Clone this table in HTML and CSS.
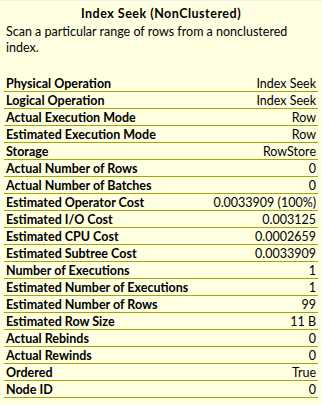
FILE: index.html
```html
<!DOCTYPE html>
<html>
<head>
<meta charset="utf-8">
<link rel="stylesheet" href="styles.css">
</head>
<body>
<div class="tip">
  <div class="title">Index Seek (NonClustered)</div>
  <div class="desc">Scan a particular range of rows from a nonclustered index.</div>
  <div class="props">
    <div class="row"><span class="k">Physical Operation</span><span class="v">Index Seek</span></div>
    <div class="row"><span class="k">Logical Operation</span><span class="v">Index Seek</span></div>
    <div class="row"><span class="k">Actual Execution Mode</span><span class="v">Row</span></div>
    <div class="row"><span class="k">Estimated Execution Mode</span><span class="v">Row</span></div>
    <div class="row"><span class="k">Storage</span><span class="v">RowStore</span></div>
    <div class="row"><span class="k">Actual Number of Rows</span><span class="v">0</span></div>
    <div class="row"><span class="k">Actual Number of Batches</span><span class="v">0</span></div>
    <div class="row"><span class="k">Estimated Operator Cost</span><span class="v">0.0033909 (100%)</span></div>
    <div class="row"><span class="k">Estimated I/O Cost</span><span class="v">0.003125</span></div>
    <div class="row"><span class="k">Estimated CPU Cost</span><span class="v">0.0002659</span></div>
    <div class="row"><span class="k">Estimated Subtree Cost</span><span class="v">0.0033909</span></div>
    <div class="row"><span class="k">Number of Executions</span><span class="v">1</span></div>
    <div class="row"><span class="k">Estimated Number of Executions</span><span class="v">1</span></div>
    <div class="row"><span class="k">Estimated Number of Rows</span><span class="v">99</span></div>
    <div class="row"><span class="k">Estimated Row Size</span><span class="v">11 B</span></div>
    <div class="row"><span class="k">Actual Rebinds</span><span class="v">0</span></div>
    <div class="row"><span class="k">Actual Rewinds</span><span class="v">0</span></div>
    <div class="row"><span class="k">Ordered</span><span class="v">True</span></div>
    <div class="row"><span class="k">Node ID</span><span class="v">0</span></div>
  </div>
</div>
</body>
</html>
```

FILE: styles.css
```css
html, body {
  margin: 0;
  padding: 0;
  background: #ffffe1;
}
.tip {
  width: 322px;
  height: 405px;
  box-sizing: border-box;
  border-top: 1px solid #f4f4ec;
  padding: 5px 4px 0 4px;
  font-family: Lato, "DejaVu Sans", sans-serif;
  font-size: 12.5px;
  color: #000;
  background: #ffffe1;
}
.title {
  font-weight: bold;
  text-align: center;
  line-height: 16px;
  letter-spacing: 0.5px;
}
.desc {
  padding: 2px 2px 0 2px;
  line-height: 16px;
  width: 290px;
}
.props {
  margin-top: 19px;
}
.row {
  display: flex;
  justify-content: space-between;
  height: 16px;
  line-height: 17px;
  padding: 0 2px;
  border-bottom: 1px solid #a6a600;
}
.k {
  font-weight: bold;
}
```
